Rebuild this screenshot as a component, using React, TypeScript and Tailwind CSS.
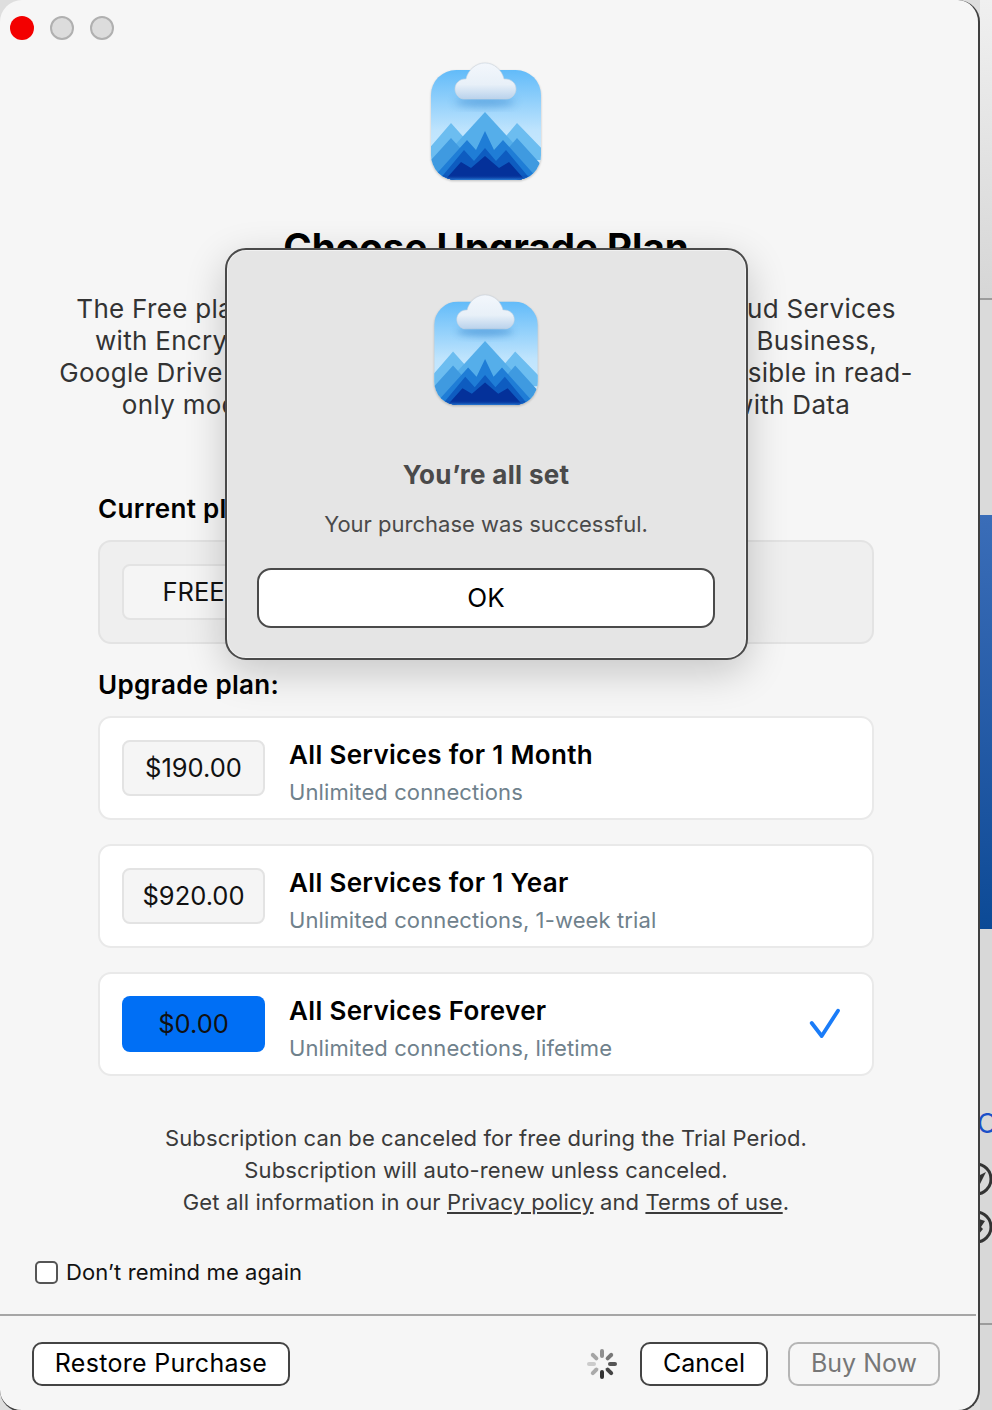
import { useId } from "react";

const SANS = "font-['Inter','Noto_Sans',sans-serif]";

const AppIcon = ({ className }: { className: string }) => {
  const id = useId();
  return (
    <svg viewBox="0 -8 110 120" className={`drop-shadow-[0_1px_1px_rgba(0,0,0,0.22)] ${className}`}>
      <defs>
        <linearGradient id={`${id}sky`} x1="0" y1="0" x2="0" y2="1">
          <stop offset="0" stopColor="#62bbf9" />
          <stop offset="0.55" stopColor="#bfe4fd" />
          <stop offset="1" stopColor="#d6eefe" />
        </linearGradient>
        <linearGradient id={`${id}cloud`} x1="0" y1="0" x2="0" y2="1">
          <stop offset="0" stopColor="#f3f7fc" />
          <stop offset="0.6" stopColor="#e8f0f8" />
          <stop offset="1" stopColor="#b9d2ec" />
        </linearGradient>
        <linearGradient id={`${id}rim`} x1="0" y1="0" x2="0" y2="1">
          <stop offset="0" stopColor="#04319a" stopOpacity="0" />
          <stop offset="1" stopColor="#2a7fd8" />
        </linearGradient>
        <filter id={`${id}blur`} x="-30%" y="-50%" width="160%" height="200%">
          <feGaussianBlur stdDeviation="4" />
        </filter>
        <clipPath id={`${id}clip`}>
          <rect x="0" y="0" width="110" height="110" rx="25" />
        </clipPath>
      </defs>
      <g clipPath={`url(#${id}clip)`}>
        <rect x="0" y="0" width="110" height="110" fill={`url(#${id}sky)`} />
        <ellipse cx="54" cy="32" rx="30" ry="5" fill="#2f7fc9" opacity="0.5" filter={`url(#${id}blur)`} />
        <path d="M-12 90 L20 53 L53 90Z M55 90 L86 53 L122 90Z" fill="#6cbdf0" />
        <path d="M-8 110 L54 42 L116 110Z" fill="#55aeea" />
        <path d="M-18 110 L20 68 L58 110Z M50 110 L86 68 L124 110Z" fill="#3f9ae0" />
        <path d="M0 110 L36 70 L45 80 L54 61 L63 80 L72 70 L108 110Z" fill="#1f7dd6" />
        <path d="M8 110 L33 80 L43 91 L54 78 L65 91 L75 80 L100 110Z" fill="#0e5cc0" />
        <path d="M14 110 L30 92 L40 98 L54 86 L68 98 L78 92 L94 110Z" fill="#04319a" />
        <rect x="0" y="105" width="110" height="5" fill={`url(#${id}rim)`} />
      </g>
      <path
        d="M33 29 H75 C81 29 85 24 85 19 C85 13 80 8.5 73 9 C71 0 63 -7 54 -7 C45 -7 37 0 35 9 C29 8.5 24 13 24 19 C24 24 28 29 33 29Z"
        fill={`url(#${id}cloud)`}
        stroke="#cbd5df"
        strokeWidth="0.6"
      />
    </svg>
  );
};

const Spinner = () => {
  const colors = ["#555555", "#444444", "#333333", "#aaaaaa", "#cccccc", "#a5a5a5", "#8f8f8f", "#777777"];
  return (
    <svg viewBox="0 0 36 36" className="w-9 h-9">
      {colors.map((color, i) => (
        <line
          key={i}
          x1="26"
          y1="18"
          x2="31"
          y2="18"
          stroke={color}
          strokeWidth="4"
          strokeLinecap="round"
          transform={`rotate(${i * 45} 18 18)`}
        />
      ))}
    </svg>
  );
};

const Plan = ({ price, title, sub, selected }: { price: string; title: string; sub: string; selected?: boolean }) => (
  <div className="h-[104px] w-[776px] rounded-[13px] border-2 border-[#e9e9e9] bg-white flex items-center pl-[22px] pr-[31px]">
    <div
      className={`w-[143px] h-[56px] rounded-[8px] flex items-center justify-center text-[25.5px] text-[#111] ${
        selected ? "bg-[#006ff5]" : "bg-[#f5f5f5] border-2 border-[#e3e3e3]"
      }`}
    >
      {price}
    </div>
    <div className="ml-[24px] flex-1 pt-[9px]">
      <div className="text-[26px] leading-[32px] font-semibold tracking-[0.33px] text-black">{title}</div>
      <div className="mt-[6px] text-[22px] leading-[30px] tracking-[0.11px] text-[#6f818c]">{sub}</div>
    </div>
    {selected && (
      <svg viewBox="0 0 36 36" className="w-9 h-9">
        <path
          d="M6.7 17 L16.7 30 L33 4.7"
          fill="none"
          stroke="#1a7cf8"
          strokeWidth="3.8"
          strokeLinecap="round"
          strokeLinejoin="round"
        />
      </svg>
    )}
  </div>
);

const Button = ({ label, className }: { label: string; className: string }) => (
  <button className={`h-[44px] rounded-[10px] border-2 text-[25px] ${className}`}>{label}</button>
);

const DialIcon = ({ d }: { d: string }) => (
  <svg viewBox="0 0 34 34" className="w-[34px] h-[34px] shrink-0 -ml-[21px]">
    <circle cx="17" cy="17" r="15" fill="none" stroke="#333" strokeWidth="3" />
    <path d={d} fill="#333" />
  </svg>
);

export default function App() {
  return (
    <div className={`relative w-[992px] h-[1410px] overflow-hidden bg-[#dedede] flex items-start ${SANS}`}>
      <div className="relative z-10 w-[980px] h-[1412px] rounded-[22px] border-r-2 border-b-2 border-[#3f3f3f] bg-[#f6f6f6] flex flex-col shrink-0">
        <div className="flex gap-4 pl-[10px] pt-[16px]">
          <span className="w-6 h-6 rounded-full bg-[#f30000]" />
          <span className="w-6 h-6 rounded-full bg-[#dcdcdc] border-2 border-[#b0b0b0]" />
          <span className="w-6 h-6 rounded-full bg-[#dcdcdc] border-2 border-[#b0b0b0]" />
        </div>
        <div className="w-[972px] flex justify-center mt-[22px]">
          <AppIcon className="w-[110px] h-[120px]" />
        </div>
        <h1 className="w-[972px] mt-[43px] text-center text-[38.5px] leading-[44px] font-bold text-black">
          Choose Upgrade Plan
        </h1>
        <p className="w-[972px] mt-[24px] text-center text-[26px] leading-[32px] tracking-[0.3px] text-[#333] whitespace-nowrap">
          The Free plan allows you to mount and browse all Cloud Services
          <br />
          with Encrypted connection, OneDrive, Box, Dropbox Business,
          <br />
          Google Drive and all other cloud services will be accessible in read-
          <br />
          only mode. Upgrade to get full access and work with Data
        </p>
        <div className="mt-[72px] pl-[98px] flex flex-col">
          <div className="text-[26px] leading-[32px] font-semibold tracking-[0.33px] text-black">Current plan:</div>
          <div className="mt-[15px] h-[104px] w-[776px] rounded-[13px] border-2 border-[#e3e3e3] bg-[#efefef] flex items-center pl-[22px]">
            <div className="w-[143px] h-[56px] rounded-[8px] bg-[#f5f5f5] border-2 border-[#e3e3e3] flex items-center justify-center text-[25.5px] text-[#111]">
              FREE
            </div>
          </div>
          <div className="mt-[25px] text-[26px] leading-[32px] font-semibold tracking-[0.33px] text-black">
            Upgrade plan:
          </div>
          <div className="mt-[15px] flex flex-col gap-[24px]">
            <Plan price="$190.00" title="All Services for 1 Month" sub="Unlimited connections" />
            <Plan price="$920.00" title="All Services for 1 Year" sub="Unlimited connections, 1-week trial" />
            <Plan price="$0.00" title="All Services Forever" sub="Unlimited connections, lifetime" selected />
          </div>
        </div>
        <p className="w-[972px] mt-[46px] text-center text-[22px] leading-[32px] tracking-[0.11px] text-[#3a3a3a]">
          Subscription can be canceled for free during the Trial Period.
          <br />
          Subscription will auto-renew unless canceled.
          <br />
          Get all information in our <span className="underline">Privacy policy</span> and{" "}
          <span className="underline">Terms of use</span>.
        </p>
        <div className="mt-[40px] pl-[35px] flex items-center gap-[8px]">
          <span className="w-[23px] h-[23px] rounded-[5px] bg-white border-2 border-[#555]" />
          <span className="text-[22px] leading-[28px] tracking-[0.11px] text-[#111]">Don’t remind me again</span>
        </div>
        <div className="mt-[28px] mr-[2px] h-[2px] bg-[#a6a6a6]" />
        <div className="mt-[26px] pl-[32px] pr-[38px] flex items-center">
          <Button label="Restore Purchase" className="w-[258px] bg-white border-[#444] tracking-[0.3px] text-black" />
          <div className="ml-auto mr-[20px]">
            <Spinner />
          </div>
          <Button label="Cancel" className="w-[128px] bg-white border-[#444] text-black" />
          <Button label="Buy Now" className="ml-[20px] w-[152px] bg-[#f6f6f6] border-[#b5b5b5] text-[#777]" />
        </div>
      </div>

      {/* background window peeking out on the right */}
      <div className="flex-1 h-full flex flex-col">
        <div className="h-[300px] bg-gradient-to-b from-[#f0f0f0] to-[#d6d6d6] border-b-2 border-[#9c9c9c]" />
        <div className="h-[215px] bg-[#dadada]" />
        <div className="h-[414px] bg-gradient-to-b from-[#3a6db8] to-[#0b4a96]" />
        <div className="flex-1 bg-[#d8d8d8] flex flex-col">
          <div className="mt-[180px] -ml-[3px] text-[27px] leading-[30px] text-[#1a50c8]">C</div>
          <div className="h-[23px] shrink-0" />
          <DialIcon d="M27 10 L19 14 L19 26Z" />
          <div className="h-[14px] shrink-0" />
          <DialIcon d="M20 9 L26 11 L22 17 L24 19 L19 25Z" />
          <div className="mt-[79px] h-[2px] bg-[#9c9c9c]" />
        </div>
      </div>

      <div className="absolute z-20 left-[225px] top-[248px] w-[523px] h-[412px] pr-[1px] rounded-[21px] border-2 border-[#4a4a4a] bg-[#e5e5e5] shadow-[inset_0_0_0_1px_rgba(255,255,255,0.45),0_12px_40px_rgba(0,0,0,0.2)] flex flex-col items-center">
        <AppIcon className="mt-[44px] w-[104px] h-[113px]" />
        <div className="mt-[52px] text-[26px] leading-[32px] font-bold tracking-[0.3px] text-[#4a4a4a]">
          You’re all set
        </div>
        <div className="mt-[19px] text-[22px] leading-[28px] text-[#4a4a4a]">Your purchase was successful.</div>
        <button className="mt-[30px] w-[458px] h-[60px] pb-[2px] rounded-[14px] bg-white border-2 border-[#4a4a4a] text-[26px] text-black">
          OK
        </button>
      </div>
    </div>
  );
}
